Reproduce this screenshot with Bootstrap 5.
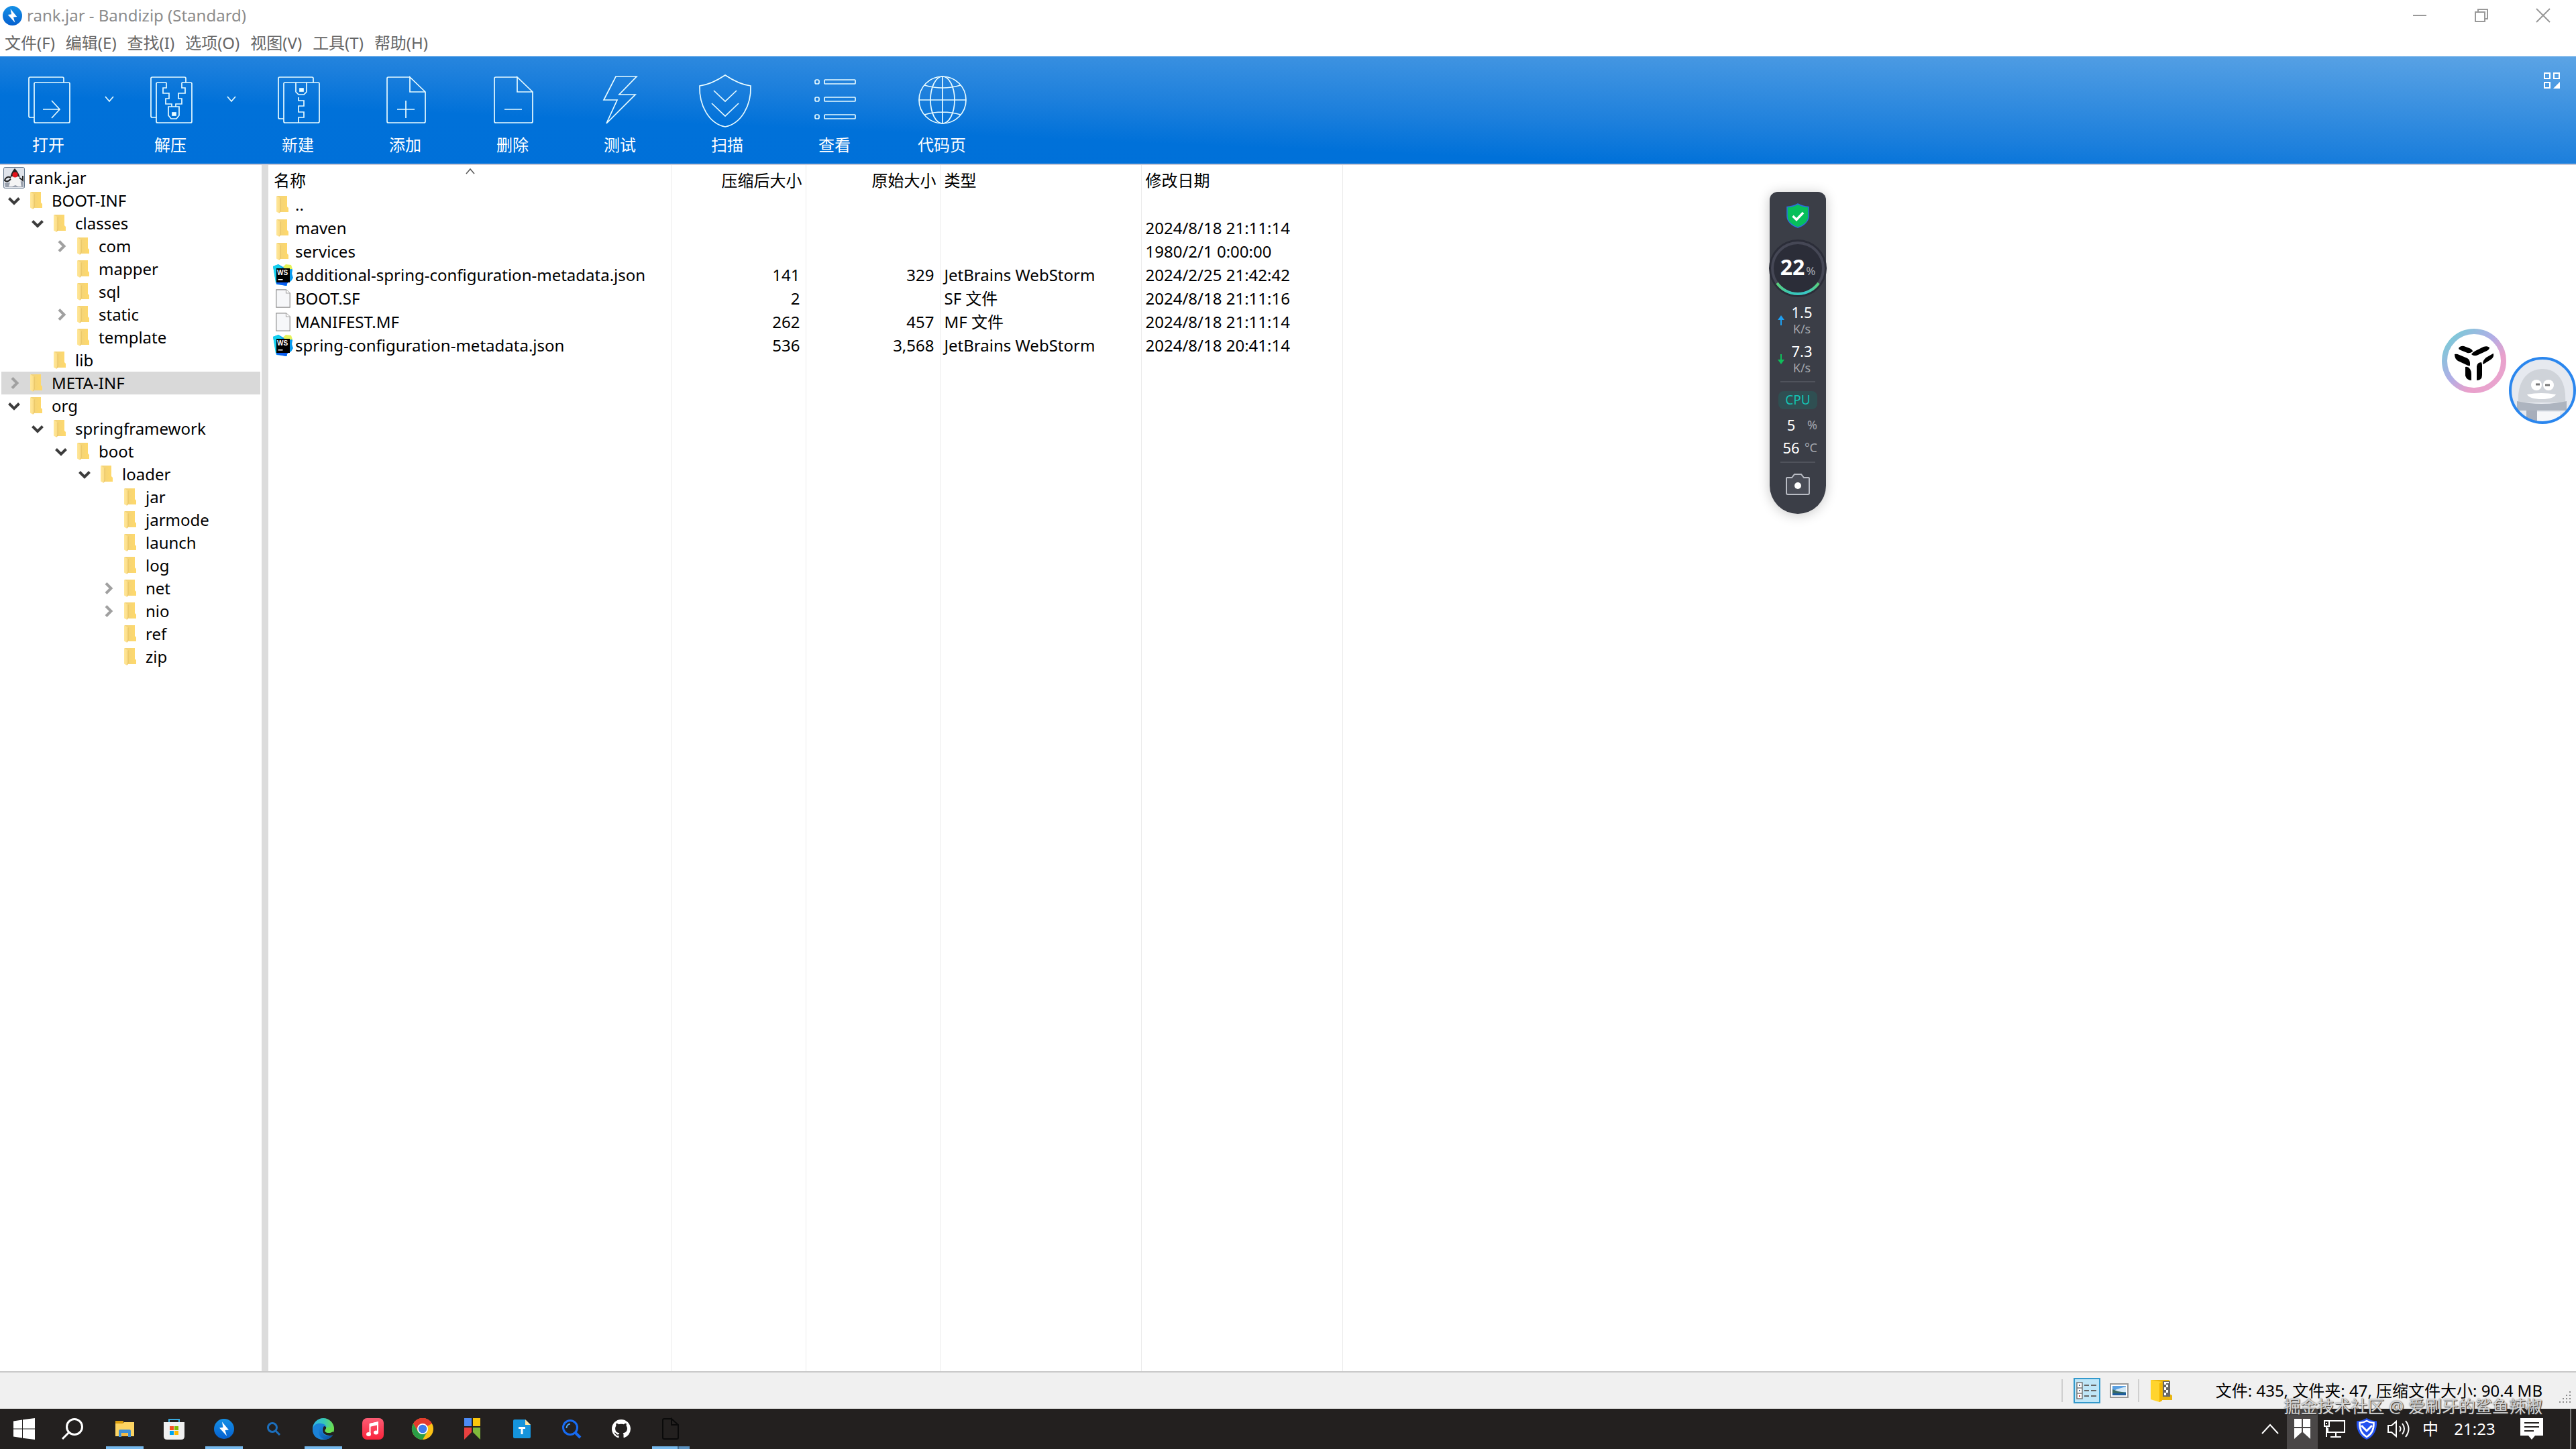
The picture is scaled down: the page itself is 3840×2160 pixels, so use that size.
<!DOCTYPE html>
<html lang="zh-CN">
<head>
<meta charset="utf-8">
<meta name="viewport" content="width=device-width, initial-scale=1">
<title>rank.jar - Bandizip (Standard)</title>
<link href="https://cdn.jsdelivr.net/npm/bootstrap@5.3.0/dist/css/bootstrap.min.css" rel="stylesheet">
<style>
  body { font-family: "Noto Sans", "Noto Sans CJK SC", sans-serif; font-size: 24px; line-height: 34px; color: #000; background: #fff; overflow: hidden; }
  svg { display: block; flex: none; overflow: visible; }
  button { border: 0; padding: 0; background: none; color: inherit; font: inherit; line-height: inherit; }
  a { color: inherit; text-decoration: none; }

  .app-title { height: 46px; padding: 0 3px 0 4px; color: #8c8c8c; }
  .app-name { margin-left: 7px; }
  .win-btn { width: 92px; height: 42px; }
  .app-menu { height: 38px; padding: 0 0 2px 7px; gap: 16px; color: #666; }

  .ribbon-bar { height: 162px; border-bottom: 2px solid #c9c9d6; color: #fff; background: linear-gradient(to top right, #0070d9 0%, #0071d9 32%, #1c7fdc 50%, #5ca4e5 100%); }
  .tool-btn { width: 160px; height: 160px; padding-top: 26px; }
  .tool-split .tool-btn { width: 144px; }
  .tool-more { width: 38px; height: 160px; padding: 0 0 32px 12px; }
  .tool-btn svg, .tool-more svg { fill: none; stroke: #e8fbff; stroke-width: 1.7; }
  .tool-btn span { margin-top: 9px; }
  .layout-btn { margin: 24px 24px 0 0; }

  .work-area { min-height: 0; }
  .tree-pane { width: 400px; border-right: 10px solid #dcdcdc; padding: 2px 2px 0; }
  .tree-pane ul { list-style: none; margin: 0; padding: 0; }
  .tree-pane ul ul ul { padding-left: 35px; }
  .tree-row { width: 100%; height: 34px; line-height: 34px; padding-left: 10px; text-align: left; }
  .tree-row .arrow { width: 18px; height: 18px; margin-right: 14px; fill: none; stroke: #a0a0a0; stroke-width: 4; }
  .tree-row[aria-expanded=true] .arrow { stroke: #3c3c3c; }
  .tree-row .folder { margin-right: 13px; }
  .tree-row .duke { margin-right: 5px; }
  .tree-row.is-root { padding-left: 3px; }
  .tree-row.is-picked { background: #d9d9d9; }

  .file-table { table-layout: fixed; width: 1601px; height: 100%; border-collapse: collapse; }
  .col-name { width: 601px; }
  .col-size { width: 200px; }
  .col-wide { width: 300px; }
  .file-table th, .file-table td { height: 35px; line-height: 34px; padding: 0 8px 0 6px; border-right: 1px solid #ebebeb; white-space: nowrap; font-weight: 400; text-align: left; vertical-align: top; }
  .file-table th { height: 42px; padding-top: 6px; padding-right: 5px; position: relative; }
  .file-table th:first-child, .file-table td:first-child { padding-left: 8px; }
  .file-table .num { text-align: right; }
  .file-table .rest td { height: 100%; }
  .file-name { height: 34px; }
  .file-ico { width: 32px; display: flex; flex: none; }
  .file-ico .folder, .file-ico .sheet { margin-left: 3px; }
  .file-ico .ws { margin-left: -2px; }
  .sort-mark { position: absolute; top: 5px; left: 50%; margin-left: -6px; }

  .status-bar { height: 56px; padding-right: 6px; border-top: 2px solid #c8c8c8; background: #f0f0f0; }
  .status-sep { width: 2px; height: 34px; background: #cfcfcf; }
  .view-btn { margin: 0 14px; }
  .view-btn.is-on { width: 40px; height: 38px; margin: 0 0 0 16px; background: #bfe6f7; border: 2px solid #3399cc; }
  .status-text { margin: 0 24px 0 64px; }
  .grip-dots { align-self: flex-end; margin-bottom: 8px; }

  .task-bar { height: 60px; background: #23201f; color: #fff; }
  .task-btn { width: 74px; height: 60px; display: flex; align-items: center; justify-content: center; }
  .task-btn.start-btn { width: 72px; }
  .task-btn.is-open { background: linear-gradient(#76b9ed, #76b9ed) center bottom / 56px 4px no-repeat; }
  .task-btn.is-many { background: linear-gradient(to right, #76b9ed 68%, #3f6a8e 68%, #3f6a8e 71%, #5a91bf 71%) center bottom / 56px 4px no-repeat; }
  .task-btn.search-btn { margin-right: 5px; width: 72px; }
  .tray-btn { width: 50px; height: 60px; display: flex; align-items: center; justify-content: center; }
  .tray-btn.is-hot { background: #4a4747; }
  .tray-btn.is-slim { width: 46px; }
  .tray-btn.is-ime { width: 44px; }
  .tray-btn.is-clock { width: 88px; }
  .tray-btn.is-notice { width: 82px; }
  .peek-btn { width: 9px; height: 60px; border-left: 2px solid #777; }

  .water-text { position: absolute; right: 50px; bottom: 48px; font-size: 25px; line-height: 32px; color: #d6d6d6; text-shadow: 1px 1px 1px #333, 0 0 2px #555; pointer-events: none; }

  .monitor { position: absolute; right: 1118px; top: 286px; width: 84px; height: 480px; border-radius: 12px 12px 42px 42px; background: #3b3e47; box-shadow: 0 2px 18px rgba(0,0,0,.22); color: #fff; font-size: 22px; line-height: 26px; }
  .monitor .shield { margin-top: 17px; }
  .gauge { width: 88px; height: 88px; margin-top: 16px; position: relative; }
  .gauge svg { position: absolute; inset: 0; }
  .gauge b { font-size: 32px; line-height: 84px; position: relative; }
  .gauge small { font-size: 17px; position: relative; color: #a9abb2; margin-left: 2px; }
  .speed { width: 60px; gap: 9px; }
  .speed .rate-val { width: 34px; text-align: center; }
  .speed small { display: block; font-size: 18px; line-height: 24px; color: #a3a6ad; }
  .rule-line { width: 52px; height: 2px; background: #50535c; }
  .cpu-tag { width: 58px; height: 27px; margin: 13px 0 6px; border-radius: 8px; background: #2f4f52; color: #14c2b4; font-size: 19px; line-height: 27px; text-align: center; }
  .stat-line { width: 58px; height: 34px; line-height: 34px; }
  .stat-line span { width: 38px; text-align: center; }
  .stat-line small { font-size: 18px; color: #a3a6ad; width: 20px; display: flex; justify-content: flex-end; }

  .float-a { position: absolute; right: 104px; top: 490px; }
  .float-b { position: absolute; right: 0; top: 532px; }
</style>
<script src="https://cdn.jsdelivr.net/npm/bootstrap@5.3.0/dist/js/bootstrap.bundle.min.js" defer></script>
</head>
<body class="d-flex flex-column vh-100">

<svg width="0" height="0" class="position-absolute" aria-hidden="true">
  <defs>
    <linearGradient id="gFold" x1="0" x2="1"><stop offset="0" stop-color="#f0d27c"/><stop offset="1" stop-color="#ffd96b"/></linearGradient>
    <linearGradient id="gFlap" x1="0" x2="1"><stop offset="0" stop-color="#ffe79a"/><stop offset="1" stop-color="#fbdc84"/></linearGradient>
    <linearGradient id="gBolt" x1="0" y1="0" x2="0" y2="1"><stop offset="0" stop-color="#1590e6"/><stop offset="1" stop-color="#0560cf"/></linearGradient>
    <linearGradient id="gMusic" x1="0" y1="0" x2="0" y2="1"><stop offset="0" stop-color="#fb5c74"/><stop offset="1" stop-color="#fa233b"/></linearGradient>
    <linearGradient id="gRing" x1="0" y1="0" x2="1" y2="1"><stop offset="0" stop-color="#6fd0d4"/><stop offset=".45" stop-color="#b0aee6"/><stop offset=".7" stop-color="#e9a0cb"/><stop offset="1" stop-color="#e8a6d0"/></linearGradient>
    <linearGradient id="gEdge" x1="0" x2="1"><stop offset="0" stop-color="#2fb4e8"/><stop offset=".55" stop-color="#37c8b4"/><stop offset="1" stop-color="#6fe04c"/></linearGradient>
    <linearGradient id="gEdge2" x1="0" x2="1" y2="1"><stop offset="0" stop-color="#1a86de"/><stop offset="1" stop-color="#0c4f9e"/></linearGradient>
    <linearGradient id="gGauge" x1="0" x2="1"><stop offset="0" stop-color="#5bd07a"/><stop offset=".3" stop-color="#38c6b4"/><stop offset=".7" stop-color="#38c6c4"/><stop offset="1" stop-color="#5bd07a"/></linearGradient>
    <symbol id="folder" viewBox="0 0 20 28"><path d="M2 1H17V17L19 19V25H4z" fill="url(#gFold)"/><path d="M1 1L7 4.500V23L5.500 27L1 24.500z" fill="url(#gFlap)"/><path d="M7 4.500V23L5.800 26" fill="none" stroke="#dfb95a" stroke-width=".8"/></symbol>
    <symbol id="down" viewBox="0 0 18 18"><path d="M1.500 5.500L9 13L16.500 5.500"/></symbol>
    <symbol id="next" viewBox="0 0 18 18"><path d="M6 1.500L13.500 9L6 16.500"/></symbol>
    <symbol id="webstorm" viewBox="0 0 32 32"><path d="M1 3L9 0L16 4L20 1L26 2L30 8L29 14L31 20L28 25L22 28V32L6 30z" fill="#0a9bf0"/><path d="M1 3L9 0L14 5L10 26L5 28z" fill="#12d0ee"/><path d="M16 4L20 0L28 1L30 7L20 8z" fill="#e6f25a"/><path d="M7 24L24 26L20 32L6 29z" fill="#0b5df0"/><rect x="6" y="6" width="20" height="21" fill="#000"/><text x="7" y="16" font-size="10" font-weight="700" fill="#fff" font-family="Liberation Sans, sans-serif">WS</text><rect x="8.500" y="22" width="7" height="1.500" fill="#fff"/></symbol>
    <symbol id="sheet" viewBox="0 0 22 28"><path d="M.8.8H15.500L21.200 6V27.200H.8z" fill="#f6f7f9" stroke="#8f8f8f" stroke-width="1.200"/><path d="M15.500.8V6H21.200" fill="#fff" stroke="#a5a5a5" stroke-width="1.200"/></symbol>
    <symbol id="bolt" viewBox="0 0 30 30"><circle cx="15" cy="15" r="15" fill="url(#gBolt)"/><path d="M12 4.500L22 16.500L16.500 17L19 25.500L8 13.500L13.500 12.800z" fill="#fff"/></symbol>
  </defs>
</svg>

<header>
  <div class="app-title d-flex align-items-center">
    <svg width="29" height="29"><use href="#bolt"/></svg>
    <span class="app-name me-auto">rank.jar - Bandizip (Standard)</span>
    <button class="win-btn d-flex justify-content-center align-items-center" aria-label="最小化"><svg width="20" height="20" stroke="#999" stroke-width="2"><path d="M0 10H20"/></svg></button>
    <button class="win-btn d-flex justify-content-center align-items-center" aria-label="还原"><svg width="20" height="20" fill="none" stroke="#999" stroke-width="2"><path d="M1 5H15V19H1zM5 5V1H19V15H15"/></svg></button>
    <button class="win-btn d-flex justify-content-center align-items-center" aria-label="关闭"><svg width="20" height="20" stroke="#999" stroke-width="2"><path d="M0 0L20 20M20 0L0 20"/></svg></button>
  </div>
  <nav class="app-menu d-flex align-items-center">
    <a href="#">文件(F)</a><a href="#">编辑(E)</a><a href="#">查找(I)</a><a href="#">选项(O)</a><a href="#">视图(V)</a><a href="#">工具(T)</a><a href="#">帮助(H)</a>
  </nav>
</header>

<div class="ribbon-bar d-flex align-items-start" role="toolbar">
  <div class="tool-split d-flex">
    <button class="tool-btn d-flex flex-column align-items-center"><svg width="80" height="80"><rect x="19" y="13" width="53" height="60" rx="2"/><path d="M19 65H13a2 2 0 0 1-2-2V7a2 2 0 0 1 2-2H61a2 2 0 0 1 2 2V13M32 53H57M45 40L57 53L45 66"/></svg><span>打开</span></button>
    <button class="tool-more d-flex align-items-center" aria-label="更多打开选项"><svg width="14" height="8"><path d="M1 0L7 7L13 0"/></svg></button>
  </div>
  <div class="tool-split d-flex">
    <button class="tool-btn d-flex flex-column align-items-center"><svg width="80" height="80"><path d="M19 65H13a2 2 0 0 1-2-2V7a2 2 0 0 1 2-2H61a2 2 0 0 1 2 2V13M34 13H21a2 2 0 0 0-2 2V71a2 2 0 0 0 2 2H70a2 2 0 0 0 2-2V15a2 2 0 0 0-2-2H57M34 13V21H29V29H38V37H33V45H42V49M57 13V21H62V29H52V37H57V45H48V49M37 49H53V62L49 67H41L37 62z"/><rect x="43" y="58" width="5" height="4" fill="#e8fbff"/></svg><span>解压</span></button>
    <button class="tool-more d-flex align-items-center" aria-label="更多解压选项"><svg width="14" height="8"><path d="M1 0L7 7L13 0"/></svg></button>
  </div>
  <button class="tool-btn d-flex flex-column align-items-center"><svg width="80" height="80"><rect x="19" y="13" width="53" height="60" rx="2"/><path d="M19 67H13a2 2 0 0 1-2-2V7a2 2 0 0 1 2-2H61a2 2 0 0 1 2 2V13M37 13V27L41 31H49L53 27V13M41 35V40H49V48H41V57H49V65H41V73"/><rect x="43" y="22" width="5" height="4" fill="#e8fbff"/></svg><span>新建</span></button>
  <button class="tool-btn d-flex flex-column align-items-center"><svg width="80" height="80"><path d="M47 5H15a2 2 0 0 0-2 2V71a2 2 0 0 0 2 2H68a2 2 0 0 0 2-2V27L47 5V27H70M28 53H54M41 40V66"/></svg><span>添加</span></button>
  <button class="tool-btn d-flex flex-column align-items-center"><svg width="80" height="80"><path d="M47 5H15a2 2 0 0 0-2 2V71a2 2 0 0 0 2 2H68a2 2 0 0 0 2-2V27L47 5V27H70M28 53H54"/></svg><span>删除</span></button>
  <button class="tool-btn d-flex flex-column align-items-center"><svg width="80" height="80"><path d="M34 4H65L39 31H63L20 74L36 39H16z"/></svg><span>测试</span></button>
  <button class="tool-btn d-flex flex-column align-items-center"><svg width="80" height="80"><path d="M37 2Q16 16-1 18C-2 46 12 74 37 79C62 74 76 46 75 18Q58 16 37 2zM20 25L37 41L54 25M17 44L37 63L57 44"/></svg><span>扫描</span></button>
  <button class="tool-btn d-flex flex-column align-items-center"><svg width="80" height="80"><g id="vrow"><rect x="11" y="9" width="6" height="6" rx="2"/><rect x="25" y="9" width="46" height="6" rx="1"/></g><use href="#vrow" y="26"/><use href="#vrow" y="52"/></svg><span>查看</span></button>
  <button class="tool-btn d-flex flex-column align-items-center"><svg width="80" height="80"><circle cx="41" cy="39" r="35"/><ellipse cx="41" cy="39" rx="18" ry="35"/><path d="M6 39H76M41 4V74M14 17Q41 25 68 17M14 61Q41 53 68 61"/></svg><span>代码页</span></button>
  <button class="layout-btn ms-auto" aria-label="布局"><svg width="24" height="24" fill="none" stroke="#fff" stroke-width="2"><path d="M1 1H9V9H1zM15 1H23V9H15zM1 15H9V23H1z"/><path d="M24 14V24H14z" fill="#fff" stroke="none"/></svg></button>
</div>

<main class="work-area d-flex flex-fill">
  <aside class="tree-pane flex-shrink-0">
    <ul>
      <li><button class="tree-row is-root d-flex align-items-center"><svg width="32" height="32" class="duke" viewBox="0 0 32 32"><rect x=".5" y=".5" width="31" height="31" rx="2" fill="#dfe3ea" stroke="#66788c"/><path d="M2 24L30 21V30H3z" fill="#9aa1ad"/><path d="M17 2C21 6 24 11 25 17H10C11 10 14 5 17 2z" fill="#222"/><path d="M11 15C14 13 20 13 24 15C26 20 26 26 27 29H22L18 27L13 29H8C10 25 10 20 11 15z" fill="#f4f4f4"/><path d="M11 16C7 13 3 16 2 20C5 23 8 21 11 18M24 16L29 20L29 13" fill="none" stroke="#222" stroke-width="2"/><circle cx="17.500" cy="11.500" r="4" fill="#e3131b"/></svg>rank.jar</button>
      <ul>
        <li><button class="tree-row d-flex align-items-center" aria-expanded="true"><svg class="arrow"><use href="#down"/></svg><svg class="folder" width="20" height="28"><use href="#folder"/></svg>BOOT-INF</button>
          <ul>
            <li><button class="tree-row d-flex align-items-center" aria-expanded="true"><svg class="arrow"><use href="#down"/></svg><svg class="folder" width="20" height="28"><use href="#folder"/></svg>classes</button>
              <ul>
                <li><button class="tree-row d-flex align-items-center" aria-expanded="false"><svg class="arrow"><use href="#next"/></svg><svg class="folder" width="20" height="28"><use href="#folder"/></svg>com</button></li>
                <li><button class="tree-row d-flex align-items-center"><svg class="arrow"></svg><svg class="folder" width="20" height="28"><use href="#folder"/></svg>mapper</button></li>
                <li><button class="tree-row d-flex align-items-center"><svg class="arrow"></svg><svg class="folder" width="20" height="28"><use href="#folder"/></svg>sql</button></li>
                <li><button class="tree-row d-flex align-items-center" aria-expanded="false"><svg class="arrow"><use href="#next"/></svg><svg class="folder" width="20" height="28"><use href="#folder"/></svg>static</button></li>
                <li><button class="tree-row d-flex align-items-center"><svg class="arrow"></svg><svg class="folder" width="20" height="28"><use href="#folder"/></svg>template</button></li>
              </ul>
            </li>
            <li><button class="tree-row d-flex align-items-center"><svg class="arrow"></svg><svg class="folder" width="20" height="28"><use href="#folder"/></svg>lib</button></li>
          </ul>
        </li>
        <li><button class="tree-row is-picked d-flex align-items-center" aria-expanded="false"><svg class="arrow"><use href="#next"/></svg><svg class="folder" width="20" height="28"><use href="#folder"/></svg>META-INF</button></li>
        <li><button class="tree-row d-flex align-items-center" aria-expanded="true"><svg class="arrow"><use href="#down"/></svg><svg class="folder" width="20" height="28"><use href="#folder"/></svg>org</button>
          <ul>
            <li><button class="tree-row d-flex align-items-center" aria-expanded="true"><svg class="arrow"><use href="#down"/></svg><svg class="folder" width="20" height="28"><use href="#folder"/></svg>springframework</button>
              <ul>
                <li><button class="tree-row d-flex align-items-center" aria-expanded="true"><svg class="arrow"><use href="#down"/></svg><svg class="folder" width="20" height="28"><use href="#folder"/></svg>boot</button>
                  <ul>
                    <li><button class="tree-row d-flex align-items-center" aria-expanded="true"><svg class="arrow"><use href="#down"/></svg><svg class="folder" width="20" height="28"><use href="#folder"/></svg>loader</button>
                      <ul>
                        <li><button class="tree-row d-flex align-items-center"><svg class="arrow"></svg><svg class="folder" width="20" height="28"><use href="#folder"/></svg>jar</button></li>
                        <li><button class="tree-row d-flex align-items-center"><svg class="arrow"></svg><svg class="folder" width="20" height="28"><use href="#folder"/></svg>jarmode</button></li>
                        <li><button class="tree-row d-flex align-items-center"><svg class="arrow"></svg><svg class="folder" width="20" height="28"><use href="#folder"/></svg>launch</button></li>
                        <li><button class="tree-row d-flex align-items-center"><svg class="arrow"></svg><svg class="folder" width="20" height="28"><use href="#folder"/></svg>log</button></li>
                        <li><button class="tree-row d-flex align-items-center" aria-expanded="false"><svg class="arrow"><use href="#next"/></svg><svg class="folder" width="20" height="28"><use href="#folder"/></svg>net</button></li>
                        <li><button class="tree-row d-flex align-items-center" aria-expanded="false"><svg class="arrow"><use href="#next"/></svg><svg class="folder" width="20" height="28"><use href="#folder"/></svg>nio</button></li>
                        <li><button class="tree-row d-flex align-items-center"><svg class="arrow"></svg><svg class="folder" width="20" height="28"><use href="#folder"/></svg>ref</button></li>
                        <li><button class="tree-row d-flex align-items-center"><svg class="arrow"></svg><svg class="folder" width="20" height="28"><use href="#folder"/></svg>zip</button></li>
                      </ul>
                    </li>
                  </ul>
                </li>
              </ul>
            </li>
          </ul>
        </li>
      </ul></li>
    </ul>
  </aside>

  <section class="flex-fill">
    <table class="file-table">
      <colgroup><col class="col-name"><col class="col-size"><col class="col-size"><col class="col-wide"><col class="col-wide"></colgroup>
      <thead>
        <tr><th scope="col">名称<svg class="sort-mark" width="14" height="8" fill="none" stroke="#555" stroke-width="1.500"><path d="M1 8L7 1L13 8"/></svg></th><th scope="col" class="num">压缩后大小</th><th scope="col" class="num">原始大小</th><th scope="col">类型</th><th scope="col">修改日期</th></tr>
      </thead>
      <tbody>
        <tr><td><div class="file-name d-flex align-items-center"><span class="file-ico"><svg class="folder" width="20" height="28"><use href="#folder"/></svg></span>..</div></td><td></td><td></td><td></td><td></td></tr>
        <tr><td><div class="file-name d-flex align-items-center"><span class="file-ico"><svg class="folder" width="20" height="28"><use href="#folder"/></svg></span>maven</div></td><td></td><td></td><td></td><td>2024/8/18 21:11:14</td></tr>
        <tr><td><div class="file-name d-flex align-items-center"><span class="file-ico"><svg class="folder" width="20" height="28"><use href="#folder"/></svg></span>services</div></td><td></td><td></td><td></td><td>1980/2/1 0:00:00</td></tr>
        <tr><td><div class="file-name d-flex align-items-center"><span class="file-ico"><svg class="ws" width="32" height="32"><use href="#webstorm"/></svg></span>additional-spring-configuration-metadata.json</div></td><td class="num">141</td><td class="num">329</td><td>JetBrains WebStorm</td><td>2024/2/25 21:42:42</td></tr>
        <tr><td><div class="file-name d-flex align-items-center"><span class="file-ico"><svg class="sheet" width="22" height="28"><use href="#sheet"/></svg></span>BOOT.SF</div></td><td class="num">2</td><td></td><td>SF 文件</td><td>2024/8/18 21:11:16</td></tr>
        <tr><td><div class="file-name d-flex align-items-center"><span class="file-ico"><svg class="sheet" width="22" height="28"><use href="#sheet"/></svg></span>MANIFEST.MF</div></td><td class="num">262</td><td class="num">457</td><td>MF 文件</td><td>2024/8/18 21:11:14</td></tr>
        <tr><td><div class="file-name d-flex align-items-center"><span class="file-ico"><svg class="ws" width="32" height="32"><use href="#webstorm"/></svg></span>spring-configuration-metadata.json</div></td><td class="num">536</td><td class="num">3,568</td><td>JetBrains WebStorm</td><td>2024/8/18 20:41:14</td></tr>
        <tr class="rest"><td></td><td></td><td></td><td></td><td></td></tr>
      </tbody>
    </table>
  </section>
</main>

<footer class="status-bar d-flex align-items-center justify-content-end">
  <span class="status-sep"></span>
  <button class="view-btn is-on d-flex align-items-center justify-content-center" aria-label="详细信息"><svg width="32" height="28" fill="none"><path d="M1 2H9V10H1zM1 10H9V18H1zM1 18H9V26H1z" fill="#fff" stroke="#777" stroke-width="1.500"/><path d="M12 6H19M22 6H30M12 14H19M22 14H30M12 22H19M22 22H30" stroke="#666" stroke-width="2"/><path d="M4 6H6M4 14H6" stroke="#4a6f9a" stroke-width="2"/><path d="M4 22H6" stroke="#b33" stroke-width="2"/></svg></button>
  <button class="view-btn" aria-label="缩略图"><svg width="28" height="22"><rect x="1" y="1" width="26" height="20" fill="#fff" stroke="#999" stroke-width="2"/><rect x="4" y="4" width="20" height="14" fill="#5a9fe0"/><path d="M10 9Q17 7 24 5V13H4z" fill="#d4e9f6"/><path d="M4 9L12 12L24 14V18H4z" fill="#3a6a63"/><path d="M4 15H24V18H4z" fill="#1c5da0"/></svg></button>
  <span class="status-sep"></span>
  <svg class="ms-3" width="34" height="34"><path d="M2 1H29V22L33 24V31H8z" fill="#e8b411"/><path d="M19 3H30V26H19z" fill="#666"/><path d="M21 4H24V8H21zM24 8H27V12H24zM21 12H24V16H21zM24 16H27V20H24zM21 20H24V24H21zM24 4H28V6H24z" fill="#fff"/><path d="M1 1L18 4V32L14 34L1 30z" fill="#ffd42e"/><path d="M18 4V32L14 34V6z" fill="#f2b500"/></svg>
  <span class="status-text">文件: 435, 文件夹: 47, 压缩文件大小: 90.4 MB</span>
  <svg class="grip-dots" width="20" height="18" fill="#8b8b8b"><path d="M16 0h2v2h-2zM16 5h2v2h-2zM11 5h2v2h-2zM16 10h2v2h-2zM11 10h2v2h-2zM6 10h2v2h-2zM16 15h2v2h-2zM11 15h2v2h-2zM6 15h2v2h-2zM1 15h2v2h-2z"/></svg>
</footer>

<div class="task-bar d-flex align-items-center">
  <button class="task-btn start-btn" aria-label="开始"><svg width="32" height="32" fill="#fff"><path d="M0 4.500L13 2.500V15.500H0zM14 2.300L32 0V15.500H14zM0 16.500H13V29.500L0 27.500zM14 16.500H32V32L14 29.700z"/></svg></button>
  <button class="task-btn search-btn" aria-label="搜索"><svg width="32" height="32" fill="none" stroke="#fff" stroke-width="3"><circle cx="19" cy="13" r="11.500"/><path d="M11 21L1 31"/></svg></button>
  <button class="task-btn is-open" aria-label="文件资源管理器"><svg width="28" height="26"><path d="M0 1H12V6H0z" fill="#d99c0e"/><path d="M0 5H11L13 3H28V24H0z" fill="#fcd462"/><path d="M5 25V16Q5 14 7 14H21Q23 14 23 16V25H19V19H9V25z" fill="#3f8fd6"/><path d="M10 19H18V24H10z" fill="#f5b942"/></svg></button>
  <button class="task-btn" aria-label="Microsoft Store"><svg width="32" height="32"><path d="M8 6V2H23V6" fill="none" stroke="#39a9dd" stroke-width="2"/><path d="M0 6H31V27Q31 32 26 32H5Q0 32 0 27z" fill="#f0f0f0"/><path d="M9 12H15V18H9z" fill="#f25022"/><path d="M16 12H22V18H16z" fill="#7fba00"/><path d="M9 19H15V25H9z" fill="#00a4ef"/><path d="M16 19H22V25H16z" fill="#ffb900"/></svg></button>
  <button class="task-btn is-open" aria-label="Bandizip"><svg width="30" height="30"><use href="#bolt"/></svg></button>
  <button class="task-btn" aria-label="Everything"><svg width="20" height="20" fill="none" stroke="#1c6fbd" stroke-width="3"><circle cx="8" cy="8" r="6.500"/><path d="M12.500 12.500L19 19"/></svg></button>
  <button class="task-btn is-open" aria-label="Microsoft Edge"><svg width="32" height="32"><circle cx="16" cy="16" r="16" fill="url(#gEdge)"/><path d="M0 17C1 9 8 7 13 8C19 9 21 12 20 15C17 16 14 22 20 25C24 27 28 26 30.500 24.500C27 30 22 32 17 32C6 32 0 26 0 17z" fill="#1b82d8"/><path d="M9 20C9 15 11 12 16 11.500C12 15 13 24 20 26C24 27 28 26 30.500 24.500C28 29 24 31.500 19 31.500C13 31 9 26 9 20z" fill="url(#gEdge2)"/><path d="M20 13C21 16 18 17 18.500 19.500C20 22.500 26 23 30 20L32 22L30.500 25C26 27 20 26 17 23C14 20 15 14 17 12z" fill="#23201f"/><path d="M18.500 19.500C18.500 17 21 16 20.500 13.500L32 14C32 20 28 22 24 22C21 22 19 21 18.500 19.500z" fill="#66dd52"/></svg></button>
  <button class="task-btn" aria-label="音乐"><svg width="32" height="32"><rect width="32" height="32" rx="7" fill="url(#gMusic)"/><path d="M11.500 24V9L23 6.500V21.500" fill="none" stroke="#fff" stroke-width="2"/><path d="M11 8L24 5V10L11 13z" fill="#fff"/><ellipse cx="9.500" cy="24" rx="3.500" ry="3" fill="#fff"/><ellipse cx="20.500" cy="21.500" rx="3.500" ry="3" fill="#fff"/></svg></button>
  <button class="task-btn" aria-label="Chrome"><svg width="32" height="32"><circle cx="16" cy="16" r="16" fill="#fbc116"/><path d="M16 16L2.100 8A16 16 0 0 1 29.900 8z" fill="#e33b2e"/><path d="M16 8H29.900A16 16 0 0 0 2.100 8L9 20z" fill="#e33b2e"/><path d="M2.100 8A16 16 0 0 0 16 32L23 20L16 16L9 20z" fill="#2a9e47"/><circle cx="16" cy="16" r="8" fill="#fff"/><circle cx="16" cy="16" r="6.300" fill="#3f7cec"/></svg></button>
  <button class="task-btn" aria-label="书签"><svg width="24" height="32"><path d="M0 0H11V12H0z" fill="#4d8bf5"/><path d="M13 0H24V12H13z" fill="#fbc60c"/><path d="M0 14H11V21L0 32z" fill="#e9403f"/><path d="M13 14H24V32L13 21z" fill="#7fb93b"/></svg></button>
  <button class="task-btn" aria-label="Typora"><svg width="26" height="28"><path d="M2 0H18L26 8V26Q26 28 24 28H2Q0 28 0 26V2Q0 0 2 0z" fill="#1594dc"/><path d="M18 0L26 8H18z" fill="#ffe5a3"/><path d="M8 11H18V14H14.500V22H11.500V14H8z" fill="#fff"/></svg></button>
  <button class="task-btn" aria-label="搜索工具"><svg width="28" height="28" fill="none" stroke="#176bf2" stroke-width="3"><circle cx="12" cy="12" r="10.500"/><path d="M20 20L27 27" stroke-width="4"/><path d="M6.500 13A6 6 0 0 1 12 6.500" stroke="#4fa6f5" stroke-width="2"/></svg></button>
  <button class="task-btn" aria-label="GitHub"><svg width="28" height="28" viewBox="0 0 16 16" fill="#fff"><path d="M8 0C3.580 0 0 3.580 0 8c0 3.540 2.290 6.530 5.470 7.590.4.070.55-.17.55-.38 0-.19-.01-.82-.01-1.490-2.010.37-2.530-.49-2.690-.94-.09-.23-.48-.94-.82-1.130-.28-.15-.68-.52-.01-.53.63-.01 1.080.58 1.230.82.72 1.210 1.870.87 2.330.66.07-.52.28-.87.51-1.070-1.780-.2-3.640-.89-3.640-3.950 0-.87.31-1.590.82-2.150-.08-.2-.36-1.020.08-2.120 0 0 .67-.21 2.200.82.64-.18 1.320-.27 2-.27s1.360.09 2 .27c1.530-1.040 2.200-.82 2.200-.82.44 1.100.16 1.920.08 2.120.51.56.82 1.270.82 2.150 0 3.070-1.870 3.750-3.650 3.950.29.25.54.73.54 1.480 0 1.070-.01 1.930-.01 2.200 0 .21.15.46.55.38A8.010 8.010 0 0 0 16 8c0-4.420-3.580-8-8-8z"/></svg></button>
  <button class="task-btn is-many" aria-label="文档"><svg width="26" height="32" fill="none" stroke="#0a0a0a" stroke-width="2"><path d="M14 1H3Q1 1 1 3V29Q1 31 3 31H22Q24 31 24 29V10L14 1V10H24"/></svg></button>

  <button class="tray-btn ms-auto" aria-label="显示隐藏的图标"><svg width="26" height="14" fill="none" stroke="#fff" stroke-width="2"><path d="M1 14L13 1L25 14"/></svg></button>
  <button class="tray-btn is-hot is-slim" aria-label="书签"><svg width="24" height="30" fill="#fff"><path d="M0 0H11V12H0zM13 0H24V12H13zM0 14H11V20L0 30zM13 14H24V30L13 20z"/></svg></button>
  <button class="tray-btn" aria-label="网络"><svg width="32" height="28" fill="none" stroke="#fff" stroke-width="2"><path d="M8 2H31V19H6V12M1 2H8V10H1zM4 10V26M18 19V26M10 26H26M4 5V7"/></svg></button>
  <button class="tray-btn is-slim" aria-label="安全"><svg width="30" height="32"><path d="M15 0Q22 4 30 4.500C31 18 25 28 15 32C5 28-1 18 0 4.500Q8 4 15 0z" fill="#2452f0"/><path d="M15 4Q20 7 25.500 7C26 18 22 24 15 28C8 24 4 18 4.500 7Q10 7 15 4z" fill="none" stroke="#fff" stroke-width="2.500"/><path d="M7 11L15 19L23 11" fill="none" stroke="#fff" stroke-width="3"/></svg></button>
  <button class="tray-btn" aria-label="音量"><svg width="34" height="28" fill="none" stroke="#fff" stroke-width="2"><path d="M1 9H6L13 3V25L6 19H1zM18 10Q21 14 18 18M22 6Q28 14 22 22M27 2Q36 14 27 26"/></svg></button>
  <button class="tray-btn is-ime" aria-label="输入法"><span>中</span></button>
  <button class="tray-btn is-clock"><time>21:23</time></button>
  <button class="tray-btn is-notice me-3" aria-label="通知"><svg width="34" height="32"><path d="M0 0H34V26H22L17 32L12 26H0z" fill="#fff"/><path d="M6 7H28M6 13H28M6 19H20" stroke="#23201f" stroke-width="2"/></svg></button>
  <button class="peek-btn" aria-label="显示桌面"></button>
</div>

<div class="water-text">掘金技术社区 @ 爱刷牙的鲨鱼辣椒</div>

<div class="monitor d-flex flex-column align-items-center">
  <svg class="shield" width="34" height="37"><path d="M17 1Q24 5 33 5.500V19C33 27 26 33 17 36C8 33 1 27 1 19V5.500Q10 5 17 1z" fill="#08bf5b" stroke="#2a6fe0" stroke-width="1.500"/><path d="M9.500 19L15 24.500L25 14" fill="none" stroke="#fff" stroke-width="3.500"/></svg>
  <div class="gauge d-flex justify-content-center align-items-baseline"><svg width="88" height="88" fill="none"><circle cx="44" cy="44" r="43" fill="#2b2d38"/><circle cx="44" cy="44" r="38" stroke="#454755" stroke-width="4"/><path d="M13 66A38 38 0 0 0 75 66" stroke="url(#gGauge)" stroke-width="4"/></svg><b>22</b><small>%</small></div>
  <div class="speed d-flex align-items-center mt-2"><svg width="10" height="15" fill="#1ea0f2"><path d="M5 0L10 7H6V15H4V7H0z"/></svg><div class="rate-val">1.5<small>K/s</small></div></div>
  <div class="speed d-flex align-items-center mt-2"><svg width="10" height="15" fill="#0fbf5b"><path d="M5 15L10 8H6V0H4V8H0z"/></svg><div class="rate-val">7.3<small>K/s</small></div></div>
  <div class="rule-line mt-2"></div>
  <div class="cpu-tag">CPU</div>
  <div class="stat-line d-flex"><span>5</span><small>%</small></div>
  <div class="stat-line d-flex"><span>56</span><small>°C</small></div>
  <div class="rule-line mt-1"></div>
  <button class="mt-3" aria-label="截图"><svg width="36" height="32"><path d="M2 6H9L13 1H23L27 6H34Q35 6 35 7V29Q35 31 33 31H3Q1 31 1 29V7Q1 6 2 6z" fill="#4a4d57" stroke="#b9bcc4" stroke-width="2"/><circle cx="18" cy="18" r="5" fill="#fff"/></svg></button>
</div>

<button class="float-a" aria-label="助手"><svg width="96" height="96"><circle cx="48" cy="48" r="44" fill="#fff" stroke="url(#gRing)" stroke-width="8"/><path d="M25 29Q28 25 33 26L41 29Q46 31 46 34Q42 37 38 36L28 32Q25 31 25 29zM44 38Q46 35 50 33L62 27Q68 25 71 28Q71 31 67 33L54 39Q48 42 44 38zM19 38Q22 37 26 39L38 44Q43 47 42 55Q40 56 37 54L24 48Q19 45 19 38zM77 37Q78 43 73 46L65 51Q62 53 61 53Q61 47 66 43L73 39Q76 37 77 37zM35 57Q39 56 42 60Q44 63 44 68V77Q37 77 35 70zM52 76V56Q53 50 59 50Q60 52 60 56V69Q60 77 52 77z" fill="#000"/></svg></button>
<button class="float-b" aria-label="悬浮助手"><svg width="100" height="100"><defs><clipPath id="cBot"><circle cx="50" cy="50" r="47"/></clipPath></defs><circle cx="50" cy="50" r="48" fill="#e6e9ef"/><g clip-path="url(#cBot)"><path d="M14 68C12 36 28 18 50 18S86 36 84 68z" fill="#cfd3d9"/><path d="M12 66Q48 74 86 66V80H12z" fill="#adb4bf"/><path d="M26 80H42V100H26z" fill="#a7aebb"/><path d="M42 82H76V100H42z" fill="#f6f7f9"/><circle cx="41" cy="42" r="8" fill="#fff"/><circle cx="59" cy="42" r="8" fill="#fff"/><path d="M40 41H46M54 42H61" stroke="#777" stroke-width="3"/><path d="M27 56Q48 52 70 56Q66 63 49 63Q31 63 27 56z" fill="#fff"/></g><circle cx="50" cy="50" r="48" fill="none" stroke="#2a86ee" stroke-width="4"/></svg></button>

</body>
</html>
